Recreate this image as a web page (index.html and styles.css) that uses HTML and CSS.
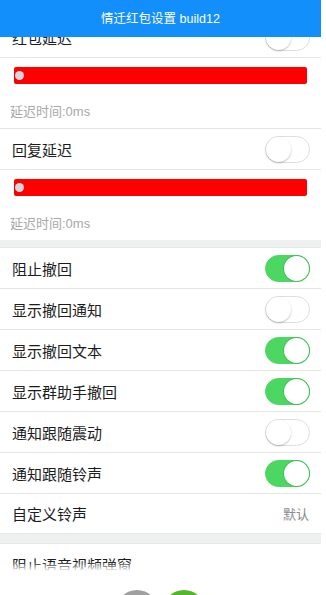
FILE: index.html
```html
<!DOCTYPE html>
<html lang="zh">
<head>
<meta charset="utf-8">
<title>情迁红包设置</title>
<link rel="stylesheet" href="styles.css">
</head>
<body>
<div class="page">
  <header class="topbar">情迁红包设置 build12</header>
  <main class="content">
    <div class="row"><span class="label">红包延迟</span><span class="switch"></span></div>
    <div class="slider-block with-line">
      <div class="bar"></div>
      <div class="hint">延迟时间:0ms</div>
    </div>
    <div class="row"><span class="label">回复延迟</span><span class="switch"></span></div>
    <div class="slider-block">
      <div class="bar"></div>
      <div class="hint">延迟时间:0ms</div>
    </div>
    <div class="gap"></div>
    <div class="row"><span class="label">阻止撤回</span><span class="switch on"></span></div>
    <div class="row"><span class="label">显示撤回通知</span><span class="switch"></span></div>
    <div class="row"><span class="label">显示撤回文本</span><span class="switch on"></span></div>
    <div class="row"><span class="label">显示群助手撤回</span><span class="switch on"></span></div>
    <div class="row"><span class="label">通知跟随震动</span><span class="switch"></span></div>
    <div class="row"><span class="label">通知跟随铃声</span><span class="switch on"></span></div>
    <div class="row last"><span class="label">自定义铃声</span><span class="value">默认</span></div>
    <div class="gap wide"></div>
    <div class="row"><span class="label">阻止语音视频弹窗</span></div>
  </main>
  <div class="fade">
    <span class="dot gray"></span>
    <span class="dot green"></span>
  </div>
</div>
</body>
</html>
```
FILE: styles.css
```css
html, body {
  margin: 0;
  padding: 0;
  background: #fff;
  height: 595px;
  overflow: hidden;
}
body {
  font-family: "Liberation Sans", "Noto Sans CJK SC", sans-serif;
  color: #1c1c1c;
}
.page {
  width: 321px;
  height: 595px;
  position: relative;
  overflow: hidden;
  background: #fff;
}
.topbar {
  position: absolute;
  top: 0;
  left: 0;
  right: 0;
  height: 37px;
  z-index: 5;
  background: #138ffc;
  color: #fff;
  font-size: 12.5px;
  display: flex;
  align-items: center;
  justify-content: center;
  padding-bottom: 2px;
  box-sizing: border-box;
}
.content {
  padding-top: 17px;
}
.row {
  height: 40px;
  border-bottom: 1px solid #e6e6e6;
  display: flex;
  align-items: center;
  justify-content: space-between;
  padding: 0 11px 0 12px;
}
.row.last {
  border-bottom: none;
  height: 39px;
}
.label {
  font-size: 15px;
  color: #1c1c1c;
}
.value {
  font-size: 13px;
  color: #8a8a8a;
  margin-right: 1px;
}
.switch {
  width: 45px;
  height: 27px;
  box-sizing: border-box;
  border: 1px solid #dedede;
  border-radius: 14px;
  background: #fff;
  position: relative;
  flex: none;
}
.switch::after {
  content: "";
  position: absolute;
  top: 0;
  left: 0;
  width: 25px;
  height: 25px;
  border-radius: 50%;
  background: #fff;
  box-shadow: 0 1px 2px rgba(0,0,0,0.25);
}
.switch.on {
  background: #4cd662;
  border-color: #4cd662;
}
.switch.on::after {
  left: auto;
  right: 0;
  box-shadow: 0 0 0 1px #3fc157;
}
.slider-block {
  padding: 9px 14px 7px 14px;
}
.slider-block.with-line {
  border-bottom: 1px solid #e6e6e6;
}
.bar {
  height: 17px;
  background: #ff0000;
  border-radius: 2px;
  position: relative;
}
.bar::before {
  content: "";
  position: absolute;
  left: 1px;
  top: 4px;
  width: 9px;
  height: 9px;
  border-radius: 50%;
  background: #d8d8d8;
}
.hint {
  margin: 19px 0 0 -4px;
  line-height: 18px;
  font-size: 13px;
  color: #a8a8a8;
}
.gap {
  height: 7px;
  background: #eeefef;
  border-bottom: 1px solid #e6e6e6;
}
.gap.wide {
  height: 9px;
  border-top: 1px solid #e6e6e6;
}
.fade {
  position: absolute;
  left: 0;
  right: 0;
  bottom: 0;
  height: 33px;
  background: linear-gradient(to bottom, rgba(255,255,255,0) 0, #fff 9px, #fff 100%);
  display: flex;
  justify-content: center;
  gap: 5px;
  padding-top: 28px;
  box-sizing: border-box;
}
.dot {
  width: 42px;
  height: 42px;
  border-radius: 50%;
  flex: none;
}
.dot.gray { background: #a0a0a0; }
.dot.green { background: #55b52f; }
```
